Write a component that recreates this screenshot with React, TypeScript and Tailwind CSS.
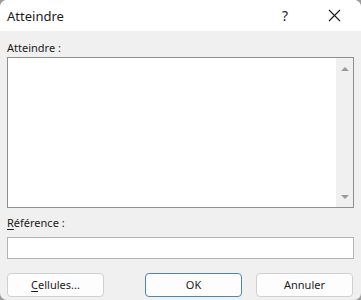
import React from "react";

export default function App() {
  return (
    <div className="w-[361px] h-[300px] bg-[#9a9a9a] overflow-hidden" style={{ fontFamily: '"Noto Sans", "Open Sans", sans-serif' }}>
      <div className="w-[361px] h-[300px] bg-[#f0f0f0] rounded-[7px] overflow-hidden flex flex-col">
        {/* Title bar */}
        <div className="h-[31px] bg-white flex items-center shrink-0">
          <span className="ml-[7px] text-[13px] text-[#1b1b1b] leading-none mt-[1px]">Atteindre</span>
          <span className="ml-auto mr-[40px] text-[14px] text-[#1b1b1b] leading-none">?</span>
          <svg className="mr-[20px]" width="13" height="13" viewBox="0 0 13 13">
            <path d="M1 1 L12 12 M12 1 L1 12" stroke="#1b1b1b" strokeWidth="1.1" />
          </svg>
        </div>
        {/* Body */}
        <div className="flex flex-col px-[7px] pt-[9px]">
          <div className="text-[11px] text-[#1b1b1b] leading-[16px] h-[16px]">Atteindre :</div>
          <div className="mt-[1px] h-[151px] border border-[#8f8f8f] bg-white flex justify-end">
            <div className="w-[17px] h-full bg-[#f0f0f0] flex flex-col items-center justify-between pt-[9px] pb-[8px]">
              <svg width="8" height="4" viewBox="0 0 8 4"><path d="M0 4 L4 0 L8 4 Z" fill="#9a9a9a" /></svg>
              <svg width="8" height="4" viewBox="0 0 8 4"><path d="M0 0 L8 0 L4 4 Z" fill="#9a9a9a" /></svg>
            </div>
          </div>
          <div className="mt-[7px] text-[11px] text-[#1b1b1b] leading-[16px] h-[16px]"><span className="underline underline-offset-[2px]">R</span>éférence :</div>
          <div className="mt-[6px] h-[22px] border border-[#b4b4b4] bg-white"></div>
          <div className="mt-[14px] flex">
            <button className="w-[97px] h-[24px] bg-[#fdfdfd] border border-[#d0d0d0] rounded-[4px] text-[11px] text-[#1b1b1b]"><span className="underline underline-offset-[2px]">C</span>ellules...</button>
            <button className="ml-[41px] w-[97px] h-[24px] bg-[#fdfdfd] border border-[#4a86b6] rounded-[4px] text-[11px] text-[#1b1b1b]">OK</button>
            <button className="ml-[14px] w-[97px] h-[24px] bg-[#fdfdfd] border border-[#d0d0d0] rounded-[4px] text-[11px] text-[#1b1b1b]">Annuler</button>
          </div>
        </div>
      </div>
    </div>
  );
}
